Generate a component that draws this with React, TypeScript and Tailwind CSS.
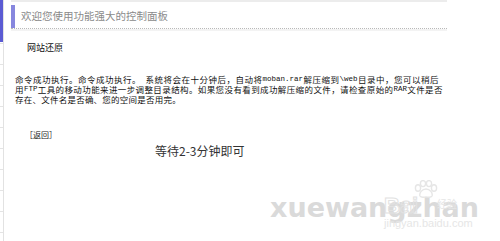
import React from 'react';

const cjk = "font-['Noto_Sans_CJK_SC','Noto_Sans',sans-serif]";

// one paragraph line, glyphs spread over a fixed width like the original
function Line({ text, width }: { text: string; width: string }) {
    const tokens = text.match(/[A-Za-z.\\]+|\s|./g) || [];
    return (
        <div className={`flex justify-between ${width}`}>
            {tokens.map((t, i) =>
                /^[A-Za-z.\\]+$/.test(t) ? (
                    <span key={i} className="font-['Liberation_Mono',monospace] text-[7.5px]">{t}</span>
                ) : t === ' ' ? (
                    <span key={i} className="w-[4px]" />
                ) : (
                    <span key={i}>{t}</span>
                )
            )}
        </div>
    );
}

function Paw() {
    return (
        <svg width="26" height="18" viewBox="0 0 26 18" className="block">
            <g fill="none" stroke="#e6e6e6" strokeWidth="1.4">
                <ellipse cx="5" cy="8" rx="2.6" ry="3.2" />
                <ellipse cx="10" cy="3.6" rx="2.6" ry="3" />
                <ellipse cx="16" cy="3.6" rx="2.6" ry="3" />
                <ellipse cx="21" cy="8" rx="2.6" ry="3.2" />
                <path d="M13 9c-4 0-7 4-6 7 1 2 4 1 6 1s5 1 6-1c1-3-2-7-6-7z" />
            </g>
        </svg>
    );
}

export default function App() {
    return (
        <div className={`relative flex w-[500px] h-[241px] bg-white overflow-hidden ${cjk}`}>
            {/* left menu edge */}
            <div className="w-[3px] h-full flex flex-col">
                <div className="w-[3px] h-[42px] shrink-0 bg-[#5b5bd3]" />
                <div className="flex flex-col gap-[20px] pt-[1px]">
                    {Array.from({ length: 10 }).map((_, i) => (
                        <div key={i} className="w-[3px] h-[1px] bg-[#e4e4e4]" />
                    ))}
                </div>
            </div>
            <div className="w-[1px] h-full bg-[#e2e2e2]" />

            {/* main panel */}
            <div className="ml-[7px] w-[436px] flex flex-col">
                <div className="border-t-2 border-[#ececec]">
                    <div className="flex items-center h-[27px] pt-[2px] border-b border-dotted border-[#b9b9b9]">
                        <div className="w-[4px] h-[23px] bg-[#8787de]" />
                        <span className="ml-[6px] text-[10.5px] leading-none text-[#8a8a8a] whitespace-nowrap">
                            欢迎您使用功能强大的控制面板
                        </span>
                    </div>
                    <div className="h-[2px] bg-[#f3f3f3]" />
                </div>

                <div className="mt-[12px] pl-[16px] text-[9px] leading-none text-[#111]">网站还原</div>

                <div className="mt-[22px] pl-[4px] text-[8.5px] leading-[10px] text-[#111] whitespace-nowrap">
                    <Line width="w-[424px]" text="命令成功执行。命令成功执行。 系统将会在十分钟后，自动将moban.rar解压缩到\web目录中，您可以稍后" />
                    <Line width="w-[428px]" text="用FTP工具的移动功能来进一步调整目录结构。如果您没有看到成功解压缩的文件，请检查原始的RAR文件是否" />
                    <Line width="w-[166px]" text="存在、文件名是否确、您的空间是否用完。" />
                </div>

                <div className="mt-[27px] pl-[14px] text-[8px] leading-none text-[#222]">［返回］</div>

                <div className="mt-[6px] pl-[144px] text-[12px] leading-none text-[#333] whitespace-nowrap">等待2-3分钟即可</div>
            </div>

            {/* watermark */}
            <div className="absolute left-[270px] top-[194px] font-['DejaVu_Sans',sans-serif] font-bold text-[27px] leading-none text-[#dadada] whitespace-nowrap">
                xuewangzhan
            </div>
            <div className="absolute left-[384px] top-[195px] font-['Liberation_Sans',sans-serif] font-bold text-[22px] leading-none text-transparent [-webkit-text-stroke:1px_#e2e2e2]">
                Bai
            </div>
            <div className="absolute left-[413px] top-[180px]">
                <Paw />
            </div>
            <div className="absolute left-[437px] top-[199px] text-[10px] leading-none text-[#e6e6e6]">经验</div>
            <div className="absolute left-[384px] top-[218px] font-['Liberation_Sans',sans-serif] text-[11px] leading-none text-[#e6e6e6]">
                jingyan.baidu.com
            </div>
        </div>
    );
}
